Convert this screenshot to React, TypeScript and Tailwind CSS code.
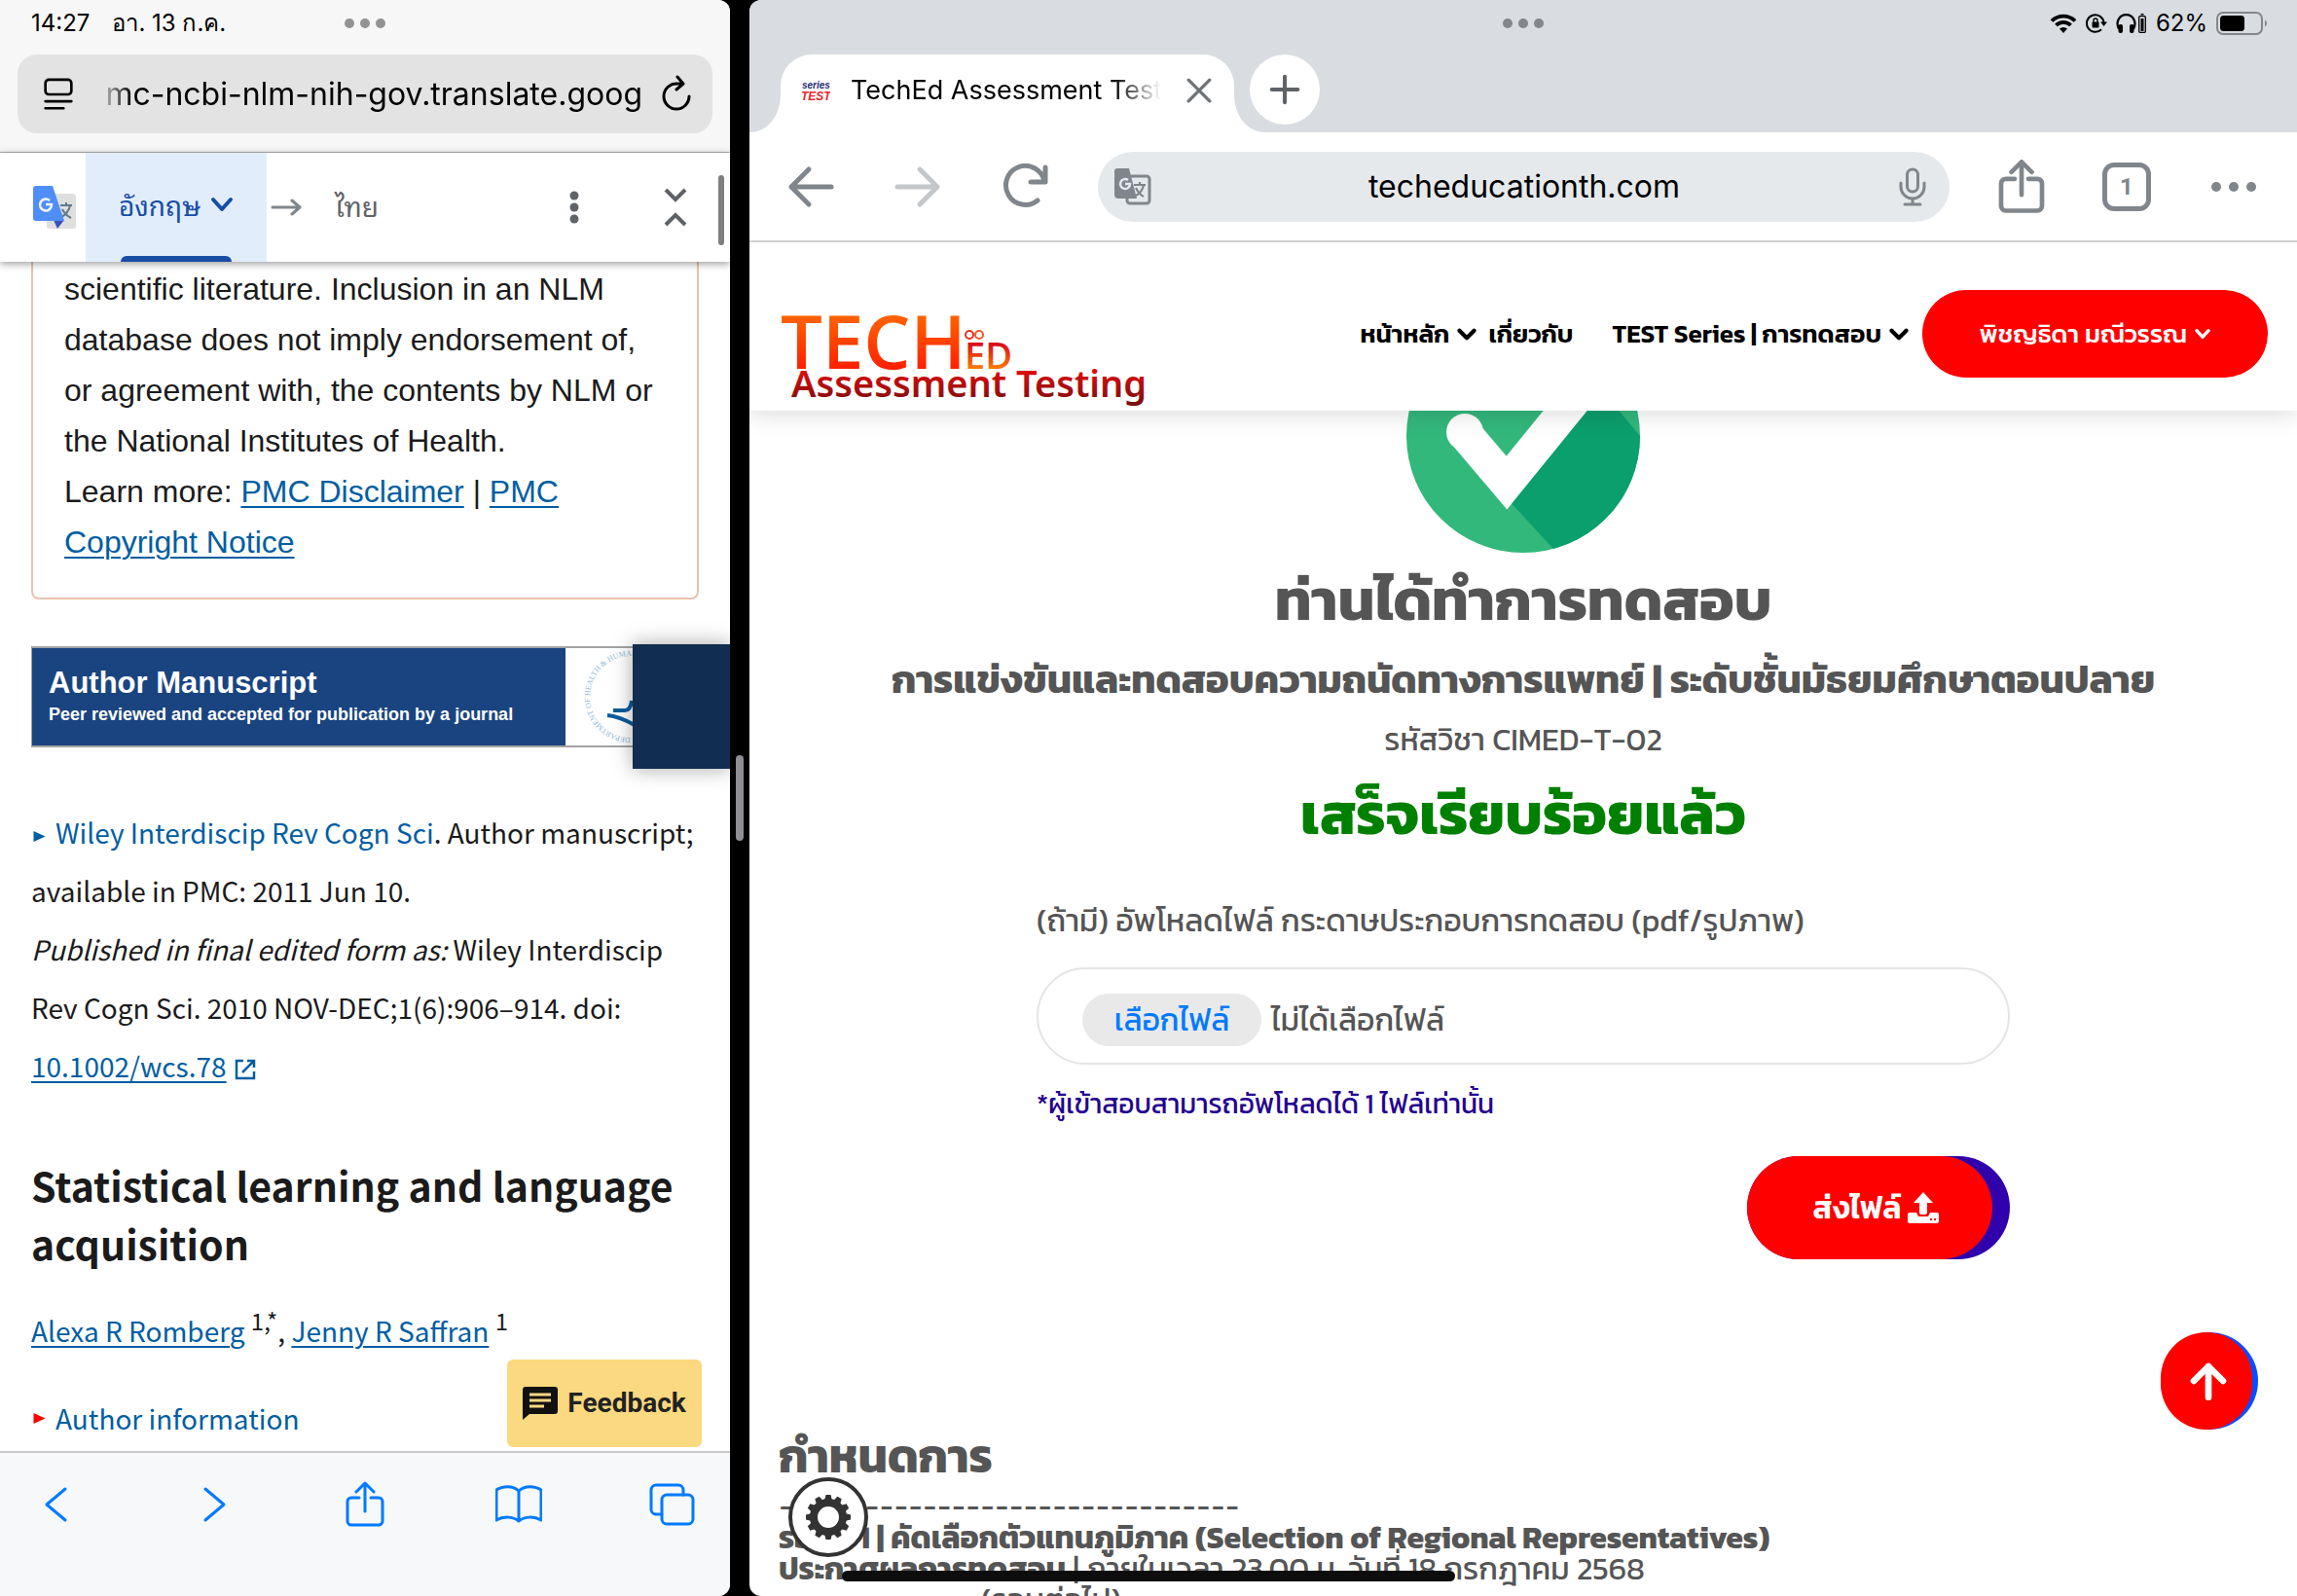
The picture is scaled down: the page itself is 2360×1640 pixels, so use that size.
import type { ReactNode } from "react";

const GEAR_TEETH = [0, 30, 60, 90, 120, 150, 180, 210, 240, 270, 300, 330];

// ────────── Icons ──────────

function Stroke({
  children,
  className,
  width = 2,
  box = 24,
}: {
  children: ReactNode;
  className: string;
  width?: number;
  box?: number;
}) {
  return (
    <svg
      viewBox={`0 0 ${box} ${box}`}
      fill="none"
      stroke="currentColor"
      strokeWidth={width}
      strokeLinecap="round"
      strokeLinejoin="round"
      className={className}
      aria-hidden="true"
    >
      {children}
    </svg>
  );
}

function Dots({ className }: { className: string }) {
  return (
    <svg viewBox="0 0 44 10" className={className} fill="currentColor" aria-hidden="true">
      <circle cx="6" cy="5" r="5" />
      <circle cx="22" cy="5" r="5" />
      <circle cx="38" cy="5" r="5" />
    </svg>
  );
}

function NavChevron() {
  return (
    <Stroke className="h-5 w-5 shrink-0" width={5}>
      <path d="M3 8l9 9 9-9" />
    </Stroke>
  );
}

function ShareIcon({ className, width }: { className: string; width: number }) {
  return (
    <Stroke className={className} width={width} box={48}>
      <path d="M18 17H10a4 4 0 0 0-4 4v20a4 4 0 0 0 4 4h28a4 4 0 0 0 4-4V21a4 4 0 0 0-4-4h-8" />
      <path d="M24 31V3M15 11l9-9 9 9" />
    </Stroke>
  );
}

function TranslateLogo() {
  return (
    <svg viewBox="0 0 44 44" className="h-11 w-11" aria-hidden="true">
      <rect x="14" y="8" width="30" height="36" rx="3" fill="#dfdfdf" />
      <path d="M28 20h12M34 17v3M38 20c-1 6-5 10-10 13M30 24c2 4 5 7 9 9" stroke="#607d8b" strokeWidth="2" fill="none" />
      <path d="M21 35h11l-7 9z" fill="#3f51b5" />
      <path d="M3 0h17l12 36H3a3 3 0 0 1-3-3V3a3 3 0 0 1 3-3z" fill="#4f8df7" />
      <path d="M17 15a6 6 0 1 0 2 4h-6" stroke="#eef3fe" strokeWidth="2.6" fill="none" />
    </svg>
  );
}

function TranslateGlyph() {
  return (
    <svg viewBox="0 0 38 38" className="h-[38px] w-[38px]" aria-hidden="true">
      <rect x="13" y="8" width="23" height="28" rx="3" fill="none" stroke="#80868b" strokeWidth="3" />
      <path d="M3 0h12l8 31H4a4 4 0 0 1-4-4V3a3 3 0 0 1 3-3z" fill="#80868b" />
      <path d="M14 12a5 5 0 1 0 2 4h-5" stroke="#e6e9ec" strokeWidth="2.5" fill="none" />
      <path d="M20 17h12M26 14v3M30 17c-1 5-4 9-8 11M22 20c2 4 4 7 8 9" stroke="#80868b" strokeWidth="2.2" fill="none" />
    </svg>
  );
}

function StatusIcons() {
  return (
    <div className="flex items-center gap-[9px] text-black">
      <svg viewBox="0 0 28 20" className="h-5 w-7" aria-label="Wi-Fi" role="img">
        <path d="M2 7.500a17 17 0 0 1 24 0M6.500 12a10.500 10.500 0 0 1 15 0" fill="none" stroke="#000" strokeWidth="3.800" />
        <path d="M14 20l-4-4.500a6 6 0 0 1 8 0z" />
      </svg>
      <svg viewBox="0 0 22 20" className="h-5 w-[22px]" aria-hidden="true">
        <path d="M18.500 9A8.800 8.800 0 1 0 16 16.200" fill="none" stroke="#000" strokeWidth="2" />
        <path d="M15 8.500h7l-3.500 4.500z" />
        <rect x="6.500" y="8.500" width="7" height="6" rx="1" />
        <path d="M8 9V7a2 2 0 0 1 4 0v2" fill="none" stroke="#000" strokeWidth="1.400" />
      </svg>
      <svg viewBox="0 0 32 20" className="h-5 w-8" aria-hidden="true">
        <path d="M3 16C-1 8 4 1.200 10.500 1.200S22 8 18 16" fill="none" stroke="#000" strokeWidth="2.200" />
        <rect x="2.500" y="11" width="4.500" height="9" rx="2" />
        <rect x="14" y="11" width="4.500" height="9" rx="2" />
        <rect x="23.700" y="2.700" width="6.600" height="16.600" rx="1" fill="none" stroke="#000" strokeWidth="1.300" />
        <rect x="25.500" y="5" width="3" height="13" />
        <rect x="25.500" y="0" width="3" height="1.500" />
      </svg>
      <span className="text-[24px] leading-8">62%</span>
      <svg viewBox="0 0 53 24" className="h-6 w-[53px]" aria-label="Battery" role="img">
        <rect x="1" y="1" width="46" height="22" rx="6" fill="none" stroke="#85878b" strokeWidth="2" />
        <rect x="4" y="4" width="25" height="16" rx="3.500" />
        <path d="M50 8.500a4 4 0 0 1 0 7z" fill="#85878b" />
      </svg>
    </div>
  );
}

function SiteLogo() {
  return (
    <svg viewBox="0 0 384 112" className="h-28 w-96 shrink-0 self-end" role="img" aria-label="TechEd Assessment Testing">
      <defs>
        <linearGradient id="flame" x1="0" y1="0" x2="0" y2="1">
          <stop offset="0.2" stopColor="#ff6a00" />
          <stop offset="0.8" stopColor="#ff1e00" />
        </linearGradient>
        <linearGradient id="ember" x1="0" y1="0" x2="0" y2="1">
          <stop offset="0.25" stopColor="#d8001c" />
          <stop offset="0.85" stopColor="#ff8a00" />
        </linearGradient>
        <linearGradient id="wine" x1="0" y1="0" x2="0" y2="1">
          <stop offset="0.2" stopColor="#e80a0a" />
          <stop offset="0.9" stopColor="#7d1010" />
        </linearGradient>
      </defs>
      <g className="font-['Open_Sans',sans-serif]">
        <text x="0" y="69" fontSize="76" fontWeight="600" fill="url(#flame)">TECH</text>
        <text x="189" y="69" fontSize="38" fontWeight="600" fill="url(#ember)">ED</text>
      </g>
      <text x="11" y="98" fontSize="38" fontWeight="600" fill="url(#wine)" className="font-['Noto_Sans',sans-serif]">
        Assessment Testing
      </text>
      <circle cx="194" cy="34" r="4" fill="none" stroke="#e8301c" strokeWidth="2" />
      <circle cx="204" cy="34" r="4" fill="none" stroke="#ee5a2a" strokeWidth="2" />
    </svg>
  );
}

function DoneBadge() {
  return (
    <svg viewBox="0 0 240 240" className="h-60 w-60 shrink-0" role="img" aria-label="เสร็จ">
      <defs>
        <clipPath id="disc">
          <circle cx="120" cy="120" r="120" />
        </clipPath>
      </defs>
      <g clipPath="url(#disc)">
        <rect width="240" height="240" fill="#33b87c" />
        <path d="M103 184l48 52 89 4V120l-40-48z" fill="#0b9f6e" />
      </g>
      <path d="M58 115l45 53L190 61" fill="none" stroke="#fff" strokeWidth="35" />
      <circle cx="60" cy="116" r="19" fill="#fff" />
      <circle cx="103" cy="177" r="11" fill="#fff" />
    </svg>
  );
}

function UploadIcon() {
  return (
    <svg viewBox="0 0 32 32" className="h-8 w-8" fill="currentColor" aria-hidden="true">
      <path d="M16 0l10 11h-6v10a2 2 0 0 1-2 2h-4a2 2 0 0 1-2-2V11H6z" />
      <path d="M2 21h7l2 4h10l2-4h7a2 2 0 0 1 2 2v7a2 2 0 0 1-2 2H2a2 2 0 0 1-2-2v-7a2 2 0 0 1 2-2z" />
      <circle cx="24" cy="28" r="1.200" fill="#f00" />
      <circle cx="28" cy="28" r="1.200" fill="#f00" />
    </svg>
  );
}

// ────────── Safari pane ──────────

function TranslateBar() {
  return (
    <div className="relative z-10 flex h-28 shrink-0 items-stretch bg-white shadow-[0_2px_8px_rgba(0,0,0,0.4)]">
      <div className="flex w-[88px] items-center pl-[34px]">
        <TranslateLogo />
      </div>
      <button className="flex w-[186px] flex-col items-center bg-[#e2edfb] font-['Noto_Sans_Thai_Looped','Noto_Sans_Thai',Roboto,sans-serif] text-[28px] text-[#174ea6]">
        <span className="flex flex-1 items-center gap-[10px]">
          อังกฤษ
          <Stroke className="h-6 w-6" width={4}>
            <path d="M3 7l9 10 9-10" />
          </Stroke>
        </span>
        <span className="h-[6px] w-[114px] rounded-t-md bg-[#174ea6]" />
      </button>
      <div className="flex w-[70px] items-center pl-1 text-[#80868b]">
        <Stroke className="h-8 w-8" width={3} box={32}>
          <path d="M2 16h28M22 9l8 7-8 7" />
        </Stroke>
      </div>
      <button className="pb-1 font-['Noto_Sans_Thai_Looped','Noto_Sans_Thai',Roboto,sans-serif] text-[28px] text-[#5f6368]">ไทย</button>
      <div className="ml-auto flex items-center gap-[87px] pr-[44px] text-[#5f6368]">
        <button aria-label="More">
          <svg viewBox="0 0 10 34" className="h-[34px] w-[10px]" fill="currentColor">
            <circle cx="5" cy="5" r="4.500" />
            <circle cx="5" cy="17" r="4.500" />
            <circle cx="5" cy="29" r="4.500" />
          </svg>
        </button>
        <button aria-label="Collapse">
          <svg viewBox="0 0 24 40" className="h-10 w-6" fill="none" stroke="currentColor" strokeWidth="4">
            <path d="M2 2l10 10L22 2M2 38l10-10 10 10" />
          </svg>
        </button>
      </div>
      <span className="absolute top-[23px] right-[6px] h-[72px] w-[6px] rounded-full bg-[#7f7f7f]" />
    </div>
  );
}

function ManuscriptBanner() {
  return (
    <div className="relative mt-12 mr-[-32px] h-[104px]">
      <div className="flex h-full border-y-2 border-l border-[#a3a3a3]">
        <div className="flex w-[548px] flex-col justify-center bg-[#1a4480] pl-[17px] font-['Liberation_Sans',Arial,sans-serif] font-bold text-white">
          <span className="text-[31px] leading-9">Author Manuscript</span>
          <span className="text-[18px] leading-7">Peer reviewed and accepted for publication by a journal</span>
        </div>
        <svg viewBox="0 0 100 100" className="ml-[17px] h-[100px] w-[100px]" aria-hidden="true">
          <path id="seal" d="M50 92a42 42 0 0 1 0-84a42 42 0 0 1 0 84" fill="none" />
          <text fontSize="8" fill="#8dbadb" className="font-['Liberation_Serif',serif]">
            <textPath href="#seal">DEPARTMENT OF HEALTH &amp; HUMAN SERVICES · USA</textPath>
          </text>
          <path d="M32 64h12q6 0 7-10M26 69q12 1 28 10" fill="none" stroke="#0a5c9c" strokeWidth="4" />
        </svg>
      </div>
      <div className="absolute top-[-2px] right-0 h-32 w-[100px] bg-[#112e51] shadow-[0_0_20px_rgba(0,0,0,0.35)]" />
    </div>
  );
}

function SafariPane() {
  const link = "text-[#005ea2] underline decoration-2 underline-offset-4";
  return (
    <section className="flex min-h-0 flex-col overflow-hidden rounded-r-xl bg-white">
      <header className="flex h-[156px] shrink-0 flex-col bg-[#f7f7f7] font-[Inter,sans-serif]">
        <div className="grid h-14 grid-cols-3 items-center pb-2">
          <div className="flex gap-[23px] pl-8 text-[24px] whitespace-nowrap text-black">
            <span>14:27</span>
            <span>อา. 13 ก.ค.</span>
          </div>
          <Dots className="h-[10px] w-11 justify-self-center text-[#939393]" />
        </div>
        <div className="mx-[18px] flex h-[81px] items-center rounded-[20px] bg-[#e3e3e3] pr-[18px] pl-[26px] text-black">
          <Stroke className="h-[38px] w-8 shrink-0" width={3} box={36}>
            <rect x="3" y="1" width="30" height="17" rx="4" />
            <path d="M3 26h30M3 34h21" />
          </Stroke>
          <input
            aria-label="Address"
            readOnly
            defaultValue="mc-ncbi-nlm-nih-gov.translate.goog"
            className="mr-[18px] ml-6 min-w-0 flex-1 bg-transparent pt-px text-right text-[32px] [mask-image:linear-gradient(to_right,transparent,black_36px)] outline-none"
          />
          <button aria-label="Reload">
            <Stroke className="h-10 w-9" width={3} box={36}>
              <path d="M30 20a13 13 0 1 1-13-13h6M18 0l6 7-7 6" />
            </Stroke>
          </button>
        </div>
      </header>
      <div className="h-px shrink-0 bg-[#b0b0b0]" />
      <TranslateBar />

      <article className="min-h-0 flex-1 overflow-hidden px-8 font-['Noto_Sans_CJK_SC',sans-serif] text-[28px] leading-[60px] text-[#1b1b1b]">
        <div className="rounded-b-lg border-2 border-t-0 border-[#e8c2ae] pt-[2px] pr-4 pb-[31px] pl-8 font-['Liberation_Sans',Arial,sans-serif] text-[32px] leading-[52px]">
          scientific literature. Inclusion in an NLM
          <br />
          database does not imply endorsement of,
          <br />
          or agreement with, the contents by NLM or
          <br />
          the National Institutes of Health.
          <br />
          Learn more: <a href="#disclaimer" className={link}>PMC Disclaimer</a> |{" "}
          <a href="#copyright" className={link}>PMC</a>
          <br />
          <a href="#copyright" className={link}>Copyright Notice</a>
        </div>
        <ManuscriptBanner />
        <p className="mt-[57px] whitespace-nowrap">
          <svg viewBox="0 0 12 12" className="mr-[10px] ml-0.5 inline h-3 w-[13px] fill-[#005ea2]" aria-hidden="true">
            <path d="M0 1l12 5.500-12 5.500z" />
          </svg>
          <a href="#journal" className="text-[#005ea2]">Wiley Interdiscip Rev Cogn Sci</a>. Author manuscript;
          <br />
          available in PMC: 2011 Jun 10.
          <br />
          <em>Published in final edited form as:</em> Wiley Interdiscip
          <br />
          Rev Cogn Sci. 2010 NOV-DEC;1(6):906–914. doi:
          <br />
          <a href="#doi" className={link}>10.1002/wcs.78</a>
          <svg viewBox="0 0 22 22" className="ml-2 inline h-[22px] w-[22px]" fill="none" stroke="#005ea2" strokeWidth="2.500" aria-hidden="true">
            <path d="M9 2H2v18h18v-7M13 2h7v7M20 2L8 14" />
          </svg>
        </p>
        <h1 className="mt-[62px] text-[41px] font-bold whitespace-nowrap">
          Statistical learning and language
          <br />
          acquisition
        </h1>
        <p className="mt-[30px]">
          <a href="#romberg" className={link}>Alexa R Romberg</a> <sup className="text-[24px]">1,*</sup>,{" "}
          <a href="#saffran" className={link}>Jenny R Saffran</a> <sup className="text-[24px]">1</sup>
        </p>
        <div className="flex">
          <button className="mt-[30px] flex h-[60px] items-center gap-[10px] pl-0.5 text-[#005ea2]">
            <svg viewBox="0 0 12 12" className="h-3 w-[13px] fill-[#f00]" aria-hidden="true">
              <path d="M0 1l12 5.500-12 5.500z" />
            </svg>
            Author information
          </button>
          <button className="mr-[-3px] ml-auto flex h-[90px] w-[200px] items-center justify-center gap-[10px] rounded-md bg-[#fbd980] font-[Roboto,sans-serif] text-[28px] font-bold text-[#222]">
            <svg viewBox="0 0 36 34" className="h-[34px] w-9" aria-hidden="true">
              <path d="M3 0h30a3 3 0 0 1 3 3v22a3 3 0 0 1-3 3H7l-7 6V3a3 3 0 0 1 3-3z" fill="#111" />
              <path d="M7 8h22M7 14h22M7 20h15" stroke="#fbd980" strokeWidth="3" />
            </svg>
            Feedback
          </button>
        </div>
      </article>

      <nav className="flex h-[149px] shrink-0 justify-between border-t-2 border-[#c9c9cb] bg-[#f7f8f9] px-9 pt-[29px] text-[#007aff]">
        <button aria-label="Back" className="h-12">
          <Stroke className="h-12 w-12" width={3} box={48}>
            <path d="M31 8L12 24l19 16" />
          </Stroke>
        </button>
        <button aria-label="Forward" className="h-12">
          <Stroke className="h-12 w-12" width={3} box={48}>
            <path d="M17 8l19 16-19 16" />
          </Stroke>
        </button>
        <button aria-label="Share" className="h-12">
          <ShareIcon className="h-12 w-12" width={3} />
        </button>
        <button aria-label="Bookmarks" className="h-12">
          <Stroke className="h-12 w-12" width={3} box={48}>
            <path d="M24 10C18 4 7 5 1 9v31c7-4 17-4 23 1 6-5 16-5 23-1V9c-6-4-17-5-23 1zM24 10v31" />
          </Stroke>
        </button>
        <button aria-label="Tabs" className="h-12">
          <Stroke className="h-12 w-12" width={3} box={48}>
            <rect x="14" y="14" width="32" height="30" rx="5" />
            <path d="M14 34H8a5 5 0 0 1-5-5V9a5 5 0 0 1 5-5h23a5 5 0 0 1 5 5v5" />
          </Stroke>
        </button>
      </nav>
    </section>
  );
}

// ────────── Chrome pane ──────────

function ChromeTopBar() {
  return (
    <header className="shrink-0 bg-[#d9dce1]">
      <div className="grid h-14 grid-cols-3 items-center pb-2">
        <span />
        <Dots className="h-[10px] w-11 justify-self-center text-[#84868a]" />
        <div className="justify-self-end pr-[30px]">
          <StatusIcons />
        </div>
      </div>
      <div className="flex h-20 items-start">
        <svg viewBox="0 0 32 80" className="h-20 w-8 fill-white" aria-hidden="true">
          <path d="M32 40v40H0c18 0 32-16 32-40z" />
        </svg>
        <div className="flex h-20 w-[466px] items-center rounded-t-[32px] bg-white pb-[6px] pl-[21px]">
          <svg viewBox="0 0 30 22" className="h-[22px] w-[30px] shrink-0" aria-hidden="true">
            <g className="font-['Liberation_Sans',sans-serif] font-bold italic">
              <text x="1" y="9" fontSize="10" fill="#1f2a78">series</text>
              <text x="0" y="21" fontSize="12" fill="#e8252a">TEST</text>
            </g>
          </svg>
          <span className="ml-[21px] w-[319px] overflow-hidden text-[27px] whitespace-nowrap text-black [mask-image:linear-gradient(to_right,black_270px,transparent_100%)]">
            TechEd Assessment Testing
          </span>
          <button aria-label="Close tab" className="ml-[26px] text-[#6f7377]">
            <Stroke className="h-[26px] w-[26px]" width={3}>
              <path d="M2 2l20 20M22 2L2 22" />
            </Stroke>
          </button>
        </div>
        <svg viewBox="0 0 32 80" className="h-20 w-8 shrink-0 fill-white" aria-hidden="true">
          <path d="M0 40v40h32C14 80 0 64 0 40z" />
        </svg>
        <button aria-label="New tab" className="ml-[-16px] flex h-[72px] w-[72px] items-center justify-center rounded-full bg-white text-[#5f6368]">
          <Stroke className="h-8 w-8" width={3}>
            <path d="M12 2v20M2 12h20" />
          </Stroke>
        </button>
      </div>
    </header>
  );
}

function ChromeToolbar() {
  return (
    <div className="flex h-[113px] shrink-0 items-center border-b-2 border-[#d0d0d0] bg-white pr-[42px] pl-[39px] text-[#80868b]">
      <button aria-label="Back">
        <Stroke className="h-12 w-12" width={5} box={48}>
          <path d="M45 24H4M22 6L4 24l18 18" />
        </Stroke>
      </button>
      <button aria-label="Forward" className="ml-[62px] text-[#c4c7c9]">
        <Stroke className="h-12 w-12" width={5} box={48}>
          <path d="M3 24h41M26 6l18 18-18 18" />
        </Stroke>
      </button>
      <button aria-label="Reload" className="ml-[62px]">
        <Stroke className="h-12 w-12" width={5} box={48}>
          <path d="M37 38A20 20 0 1 1 44 18M45 4v15H30" />
        </Stroke>
      </button>
      <div className="ml-[51px] flex h-[72px] min-w-0 flex-1 items-center rounded-full bg-[#e6e9ec] pr-[22px] pl-[17px]">
        <TranslateGlyph />
        <input
          aria-label="Search or type URL"
          readOnly
          defaultValue="techeducationth.com"
          className="min-w-0 flex-1 bg-transparent text-center text-[32px] text-black outline-none"
        />
        <button aria-label="Voice search">
          <svg viewBox="0 0 32 40" className="h-10 w-8" fill="none" stroke="currentColor" strokeWidth="3" strokeLinecap="round">
            <rect x="10.500" y="2" width="11" height="23" rx="5.500" />
            <path d="M4 16v4a12 12 0 0 0 24 0v-4M16 32v6M8 38h16" />
          </svg>
        </button>
      </div>
      <button aria-label="Share" className="ml-[46px]">
        <ShareIcon className="h-14 w-14" width={4} />
      </button>
      <button className="ml-[55px] flex h-[50px] w-[50px] items-center justify-center rounded-xl border-[5px] border-[#80868b] font-[Roboto,sans-serif] text-[24px] font-bold">
        1
      </button>
      <button aria-label="Menu" className="ml-[62px]">
        <svg viewBox="0 0 46 10" className="h-[10px] w-[46px]" fill="currentColor">
          <circle cx="5" cy="5" r="5" />
          <circle cx="23" cy="5" r="5" />
          <circle cx="41" cy="5" r="5" />
        </svg>
      </button>
    </div>
  );
}

function SiteHeader() {
  return (
    <div className="relative z-10 flex h-[173px] shrink-0 items-center bg-white pr-[30px] pl-8 shadow-[0_4px_24px_rgba(0,0,0,0.14)]">
      <SiteLogo />
      <nav className="ml-auto flex items-center pt-[14px] text-[26px] font-semibold whitespace-nowrap text-black">
        <a href="#home" className="flex items-center gap-2">
          หน้าหลัก <NavChevron />
        </a>
        <a href="#about" className="ml-3">เกี่ยวกับ</a>
        <a href="#series" className="ml-10 flex items-center gap-2">
          TEST Series | การทดสอบ <NavChevron />
        </a>
        <button className="ml-[14px] flex h-[90px] w-[355px] items-center justify-center gap-2 rounded-full bg-[#f00] font-medium text-white">
          พิชญธิดา มณีวรรณ
          <Stroke className="h-4 w-4" width={5}>
            <path d="M3 7l9 10 9-10" />
          </Stroke>
        </button>
      </nav>
    </div>
  );
}

function UploadForm() {
  return (
    <form className="mt-6 flex w-full max-w-[1000px] flex-col text-left text-[#555]">
      <label htmlFor="answer-file" className="text-[32px] leading-[60px] whitespace-nowrap">
        (ถ้ามี) อัพโหลดไฟล์ กระดาษประกอบการทดสอบ (pdf/รูปภาพ)
      </label>
      <label className="mt-[18px] flex h-[100px] cursor-pointer items-center gap-[10px] rounded-full border-2 border-[#e5e5e5] pt-2 pl-[45px] text-[32px]">
        <input id="answer-file" type="file" className="sr-only" />
        <span className="flex h-[54px] w-[184px] items-center justify-center rounded-full bg-[#e9e9e9] text-[#007aff]">
          เลือกไฟล์
        </span>
        <span>ไม่ได้เลือกไฟล์</span>
      </label>
      <p className="mt-4 text-[28px] leading-[48px] text-[#230090]">*ผู้เข้าสอบสามารถอัพโหลดได้ 1 ไฟล์เท่านั้น</p>
      <button
        type="button"
        className="mt-[30px] flex h-[106px] w-[270px] self-end rounded-full bg-[#2f00ab] text-[32px] font-semibold text-white"
      >
        <span className="flex h-full w-[252px] items-center justify-center gap-[6px] rounded-full bg-[#f00] pl-3">
          ส่งไฟล์ <UploadIcon />
        </span>
      </button>
    </form>
  );
}

function ChromePane() {
  return (
    <section className="relative flex min-h-0 flex-col overflow-hidden rounded-l-xl bg-white font-[Inter,sans-serif]">
      <ChromeTopBar />
      <ChromeToolbar />
      <div className="flex min-h-0 flex-1 flex-col overflow-hidden font-[Kanit,'Noto_Sans_Thai',Roboto,sans-serif] text-[#555]">
        <SiteHeader />
        <main className="flex shrink-0 flex-col items-center px-8 text-center">
          <div className="flex h-[146px] items-end overflow-hidden">
            <DoneBadge />
          </div>
          <h1 className="mt-2 text-[60px] leading-[80px] font-bold">ท่านได้ทำการทดสอบ</h1>
          <h2 className="text-[40px] leading-[84px] font-bold whitespace-nowrap">
            การแข่งขันและทดสอบความถนัดทางการแพทย์ | ระดับชั้นมัธยมศึกษาตอนปลาย
          </h2>
          <p className="text-[32px] leading-10">รหัสวิชา CIMED-T-02</p>
          <strong className="text-[60px] leading-[112px] font-bold text-[#008000]">เสร็จเรียบร้อยแล้ว</strong>
          <UploadForm />
        </main>
        <section className="mt-[166px] shrink-0 px-[30px] text-[32px] leading-8 whitespace-nowrap">
          <h2 className="text-[48px] leading-[72px] font-bold">กำหนดการ</h2>
          <p className="font-[Inter,sans-serif] font-medium">--------------------------------</p>
          <p className="font-bold">รอบที่ 1 | คัดเลือกตัวแทนภูมิภาค (Selection of Regional Representatives)</p>
          <p>
            <b>ประกาศผลการทดสอบ</b> | ภายในเวลา 23.00 น. วันที่ 18 กรกฎาคม 2568
          </p>
          <p className="pl-52">(รอบต่อไป)</p>
        </section>
      </div>

      <button
        aria-label="Back to top"
        className="absolute right-10 bottom-[171px] flex h-[100px] w-[100px] rounded-full bg-[#0a4dff] text-white"
      >
        <span className="flex h-full w-[94px] items-center justify-center rounded-full bg-[#f00] pl-1">
          <Stroke className="h-10 w-10" width={4}>
            <path d="M12 22V3M3 12l9-9 9 9" />
          </Stroke>
        </span>
      </button>
      <button
        aria-label="Settings"
        className="absolute bottom-10 left-10 flex h-[82px] w-[82px] items-center justify-center rounded-full border-4 border-[#333] bg-white"
      >
        <svg viewBox="-24 -24 48 48" className="h-12 w-12" aria-hidden="true">
          <circle r="15" fill="none" stroke="#333" strokeWidth="8" />
          {GEAR_TEETH.map((angle) => (
            <path key={angle} d="M-4-17l1.500-6h5l1.500 6z" fill="#333" transform={`rotate(${angle})`} />
          ))}
        </svg>
      </button>
    </section>
  );
}

export default function App() {
  return (
    <div className="relative grid h-screen grid-cols-[minmax(0,75fr)_20px_minmax(0,159fr)] grid-rows-1 overflow-hidden bg-black">
      <SafariPane />
      <div className="flex items-center justify-center">
        <span className="h-[88px] w-2 rounded-full bg-[#8e8e93]" />
      </div>
      <ChromePane />
      <span className="absolute bottom-[15px] left-1/2 h-[11px] w-[630px] -translate-x-1/2 rounded-full bg-[#0d0d0d]" />
    </div>
  );
}
